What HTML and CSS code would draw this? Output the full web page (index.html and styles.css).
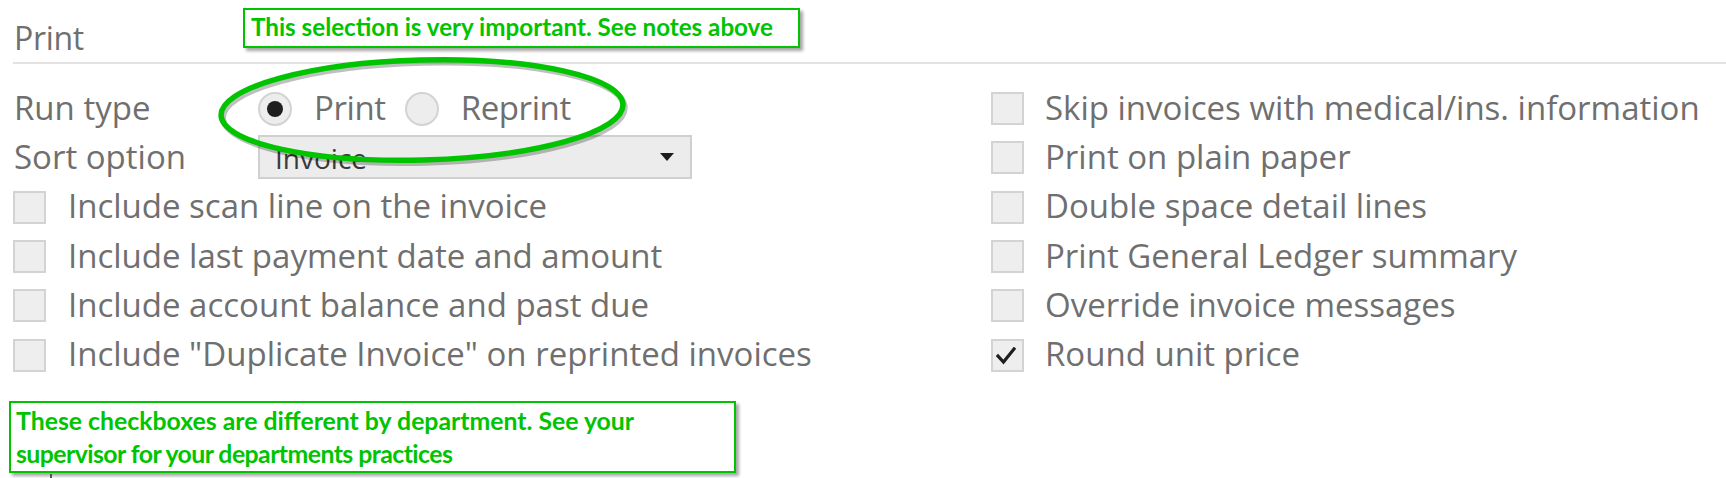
FILE: index.html
```html
<!DOCTYPE html>
<html>
<head>
<meta charset="utf-8">
<title>Print</title>
<link rel="stylesheet" href="styles.css">
</head>
<body>
<div class="page">
  <header class="section-head">
    <h2 class="section-title">Print</h2>
  </header>

  <div class="form">
    <div class="col col-left">
      <div class="row">
        <span class="label">Run type</span>
        <div class="radios">
          <span class="radio"><span class="radio-dot on"></span><span class="text">Print</span></span>
          <span class="radio"><span class="radio-dot"></span><span class="text">Reprint</span></span>
        </div>
      </div>
      <div class="row">
        <span class="label">Sort option</span>
        <div class="select"><span class="select-value">Invoice</span><span class="select-arrow"></span></div>
      </div>
      <div class="row"><span class="box"></span><span class="text">Include scan line on the invoice</span></div>
      <div class="row"><span class="box"></span><span class="text">Include last payment date and amount</span></div>
      <div class="row"><span class="box"></span><span class="text">Include account balance and past due</span></div>
      <div class="row"><span class="box"></span><span class="text">Include "Duplicate Invoice" on reprinted invoices</span></div>
    </div>
    <div class="col col-right">
      <div class="row"><span class="box"></span><span class="text">Skip invoices with medical/ins. information</span></div>
      <div class="row"><span class="box"></span><span class="text">Print on plain paper</span></div>
      <div class="row"><span class="box"></span><span class="text">Double space detail lines</span></div>
      <div class="row"><span class="box"></span><span class="text">Print General Ledger summary</span></div>
      <div class="row"><span class="box"></span><span class="text">Override invoice messages</span></div>
      <div class="row"><span class="box checked"><svg class="tick" viewBox="0 0 20 18" width="20" height="18"><polyline points="2,9 7.5,15 18,2" fill="none" stroke="#1e1e1e" stroke-width="3.2" stroke-linecap="square"/></svg></span><span class="text">Round unit price</span></div>
    </div>
  </div>

  <svg class="ring" width="440" height="124" viewBox="0 0 440 124">
    <g transform="rotate(-1.5 220 60)">
      <ellipse cx="220" cy="60" rx="201" ry="50" fill="none" stroke="rgba(0,0,0,0.25)" stroke-width="5.5" transform="translate(2,3)"/>
      <ellipse cx="220" cy="60" rx="201" ry="50" fill="none" stroke="#00c400" stroke-width="5.5"/>
    </g>
  </svg>

  <div class="note note-top">This selection is very important. See notes above</div>
  <div class="note note-bottom"><span class="note-line">These checkboxes are different by department. See your</span><span class="note-line tight">supervisor for your departments practices</span></div>
  <span class="stub"></span>
</div>
</body>
</html>
```

FILE: styles.css
```css
html, body {
  margin: 0;
  padding: 0;
  background: #ffffff;
}

body {
  font-family: "Open Sans", "Noto Sans", sans-serif;
  color: #6f6f6f;
}

.page {
  position: relative;
  width: 1726px;
  height: 478px;
  overflow: hidden;
}

.section-head {
  margin-left: 13px;
  padding-top: 17px;
  padding-bottom: 3px;
  border-bottom: 2px solid #e2e2e2;
}

.section-title {
  margin: 0 0 0 1px;
  font-weight: 400;
  font-size: 32px;
  line-height: 42px;
  letter-spacing: -0.3px;
  color: #6f6f6f;
}

.form {
  display: flex;
  margin-top: 20px;
  padding-left: 13px;
}

.col-left {
  width: 978px;
}

.col {
  display: flex;
  flex-direction: column;
}

.row {
  height: 49.3px;
  display: flex;
  align-items: center;
  font-size: 33px;
  line-height: 44px;
  white-space: nowrap;
}

.text {
  padding-bottom: 2px;
}

.label {
  width: 245px;
  padding-left: 1px;
  padding-bottom: 2px;
  box-sizing: border-box;
}

.radios {
  display: flex;
  align-items: center;
}

.radio {
  display: flex;
  align-items: center;
  margin-right: 19px;
}

.radio .text {
  letter-spacing: -0.4px;
}

.radio-dot {
  width: 34px;
  height: 34px;
  box-sizing: border-box;
  border-radius: 50%;
  border: 2px solid #d3d3d3;
  background: #ededed;
  margin-right: 22px;
  display: flex;
  align-items: center;
  justify-content: center;
}

.radio-dot.on::after {
  content: "";
  width: 16px;
  height: 16px;
  border-radius: 50%;
  background: #1f1f1f;
}

.select {
  width: 434px;
  height: 44px;
  box-sizing: border-box;
  border: 2px solid #d0d0d0;
  background: #ececec;
  display: flex;
  align-items: center;
  justify-content: space-between;
  padding: 0 16px 0 15px;
  margin-top: -2px;
}

.select-value {
  color: #3a3a3a;
  font-size: 28px;
  line-height: 40px;
  margin-top: 2px;
}

.select-arrow {
  width: 0;
  height: 0;
  border-left: 7px solid transparent;
  border-right: 7px solid transparent;
  border-top: 8px solid #1c1c1c;
}

.box {
  width: 33px;
  height: 33px;
  box-sizing: border-box;
  border: 2px solid #d3d3d3;
  background: #eeeeee;
  margin-right: 22px;
  flex: none;
  display: flex;
  align-items: center;
  justify-content: center;
}

.col-right .box {
  margin-right: 21px;
}

.tick {
  display: block;
  margin-left: -4px;
  margin-top: 1px;
}

.ring {
  position: absolute;
  left: 202px;
  top: 50px;
}

.note {
  position: absolute;
  box-sizing: border-box;
  background: #ffffff;
  border: 2px solid #00c400;
  box-shadow: 3px 3px 3px rgba(0, 0, 0, 0.35);
  font-family: "Lato", "Open Sans", sans-serif;
  font-weight: 700;
  color: #00c400;
  white-space: nowrap;
}

.note-top {
  left: 243px;
  top: 8px;
  width: 557px;
  height: 40px;
  font-size: 24.2px;
  line-height: 34px;
  padding-left: 6px;
}

.note-bottom {
  left: 9px;
  top: 401px;
  width: 727px;
  height: 72px;
  font-size: 24.8px;
  line-height: 33px;
  padding: 1px 0 0 5px;
  display: flex;
  flex-direction: column;
}

.note-line.tight {
  letter-spacing: -0.55px;
}

.stub {
  position: absolute;
  left: 50px;
  top: 474px;
  width: 2px;
  height: 4px;
  background: #555555;
}
```
